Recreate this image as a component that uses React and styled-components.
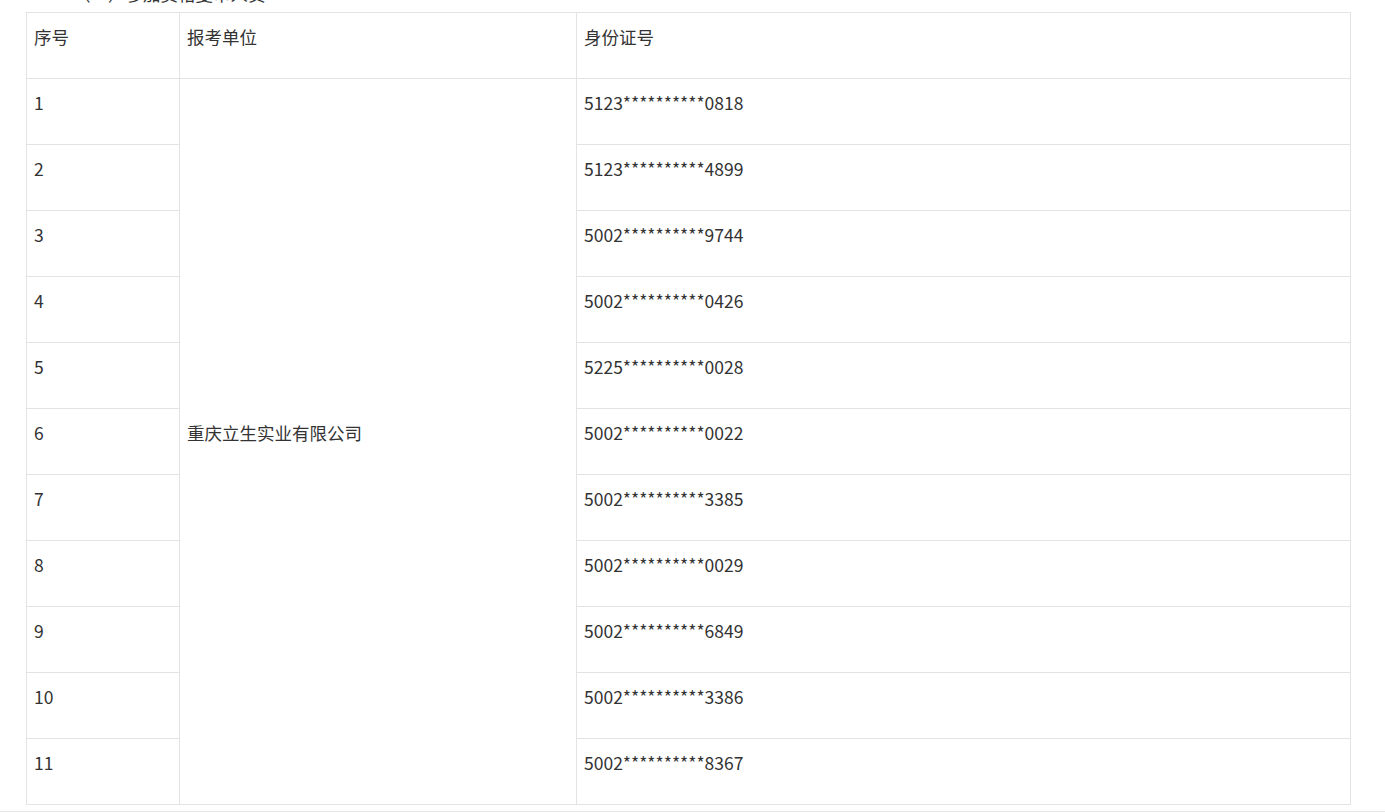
import React from 'react';
import styled, { createGlobalStyle } from 'styled-components';

const GlobalStyle = createGlobalStyle`
  html, body {
    margin: 0;
    padding: 0;
    background: #fff;
  }
  body {
    font-family: "Noto Sans CJK SC", "Noto Sans", sans-serif;
    color: #333;
    overflow: hidden;
  }
`;

const Page = styled.div`
  width: 1385px;
  height: 812px;
  overflow: hidden;
`;

const Article = styled.div`
  padding: 0 35px 6px 26px;
  border-bottom: 1px solid #e8e8e8;
`;

const Caption = styled.p`
  margin: -18px 0 6px;
  height: 24px;
  line-height: 24px;
  font-size: 17.5px;
  text-indent: 47px;
  color: #333;
  white-space: nowrap;
`;

const Table = styled.table`
  width: 1324px;
  border-collapse: collapse;
  table-layout: fixed;
  font-size: 17.5px;
  color: #333;
`;

const Col = styled.col`
  width: ${props => props.w};
`;

const Cell = styled.td`
  border: 1px solid #e3e3e3;
  padding: 12px 7px 13px;
  vertical-align: middle;
  height: 40px;
  box-sizing: border-box;
`;

const Text = styled.p`
  margin: 0 0 16px;
  line-height: 24px;
  white-space: nowrap;
`;

const rows = [
  '5123**********0818',
  '5123**********4899',
  '5002**********9744',
  '5002**********0426',
  '5225**********0028',
  '5002**********0022',
  '5002**********3385',
  '5002**********0029',
  '5002**********6849',
  '5002**********3386',
  '5002**********8367',
];

export default function App() {
  return (
    <Page>
      <GlobalStyle />
      <Article>
        <Caption>（一）参加资格复审人员</Caption>
        <Table>
          <colgroup>
            <Col w="153px" />
            <Col w="397px" />
            <Col w="774px" />
          </colgroup>
          <tbody>
            <tr>
              <Cell><Text>序号</Text></Cell>
              <Cell><Text>报考单位</Text></Cell>
              <Cell><Text>身份证号</Text></Cell>
            </tr>
            {rows.map((id, i) => (
              <tr key={id + i}>
                <Cell><Text>{i + 1}</Text></Cell>
                {i === 0 && (
                  <Cell rowSpan={rows.length}><Text>重庆立生实业有限公司</Text></Cell>
                )}
                <Cell><Text>{id}</Text></Cell>
              </tr>
            ))}
          </tbody>
        </Table>
      </Article>
    </Page>
  );
}
